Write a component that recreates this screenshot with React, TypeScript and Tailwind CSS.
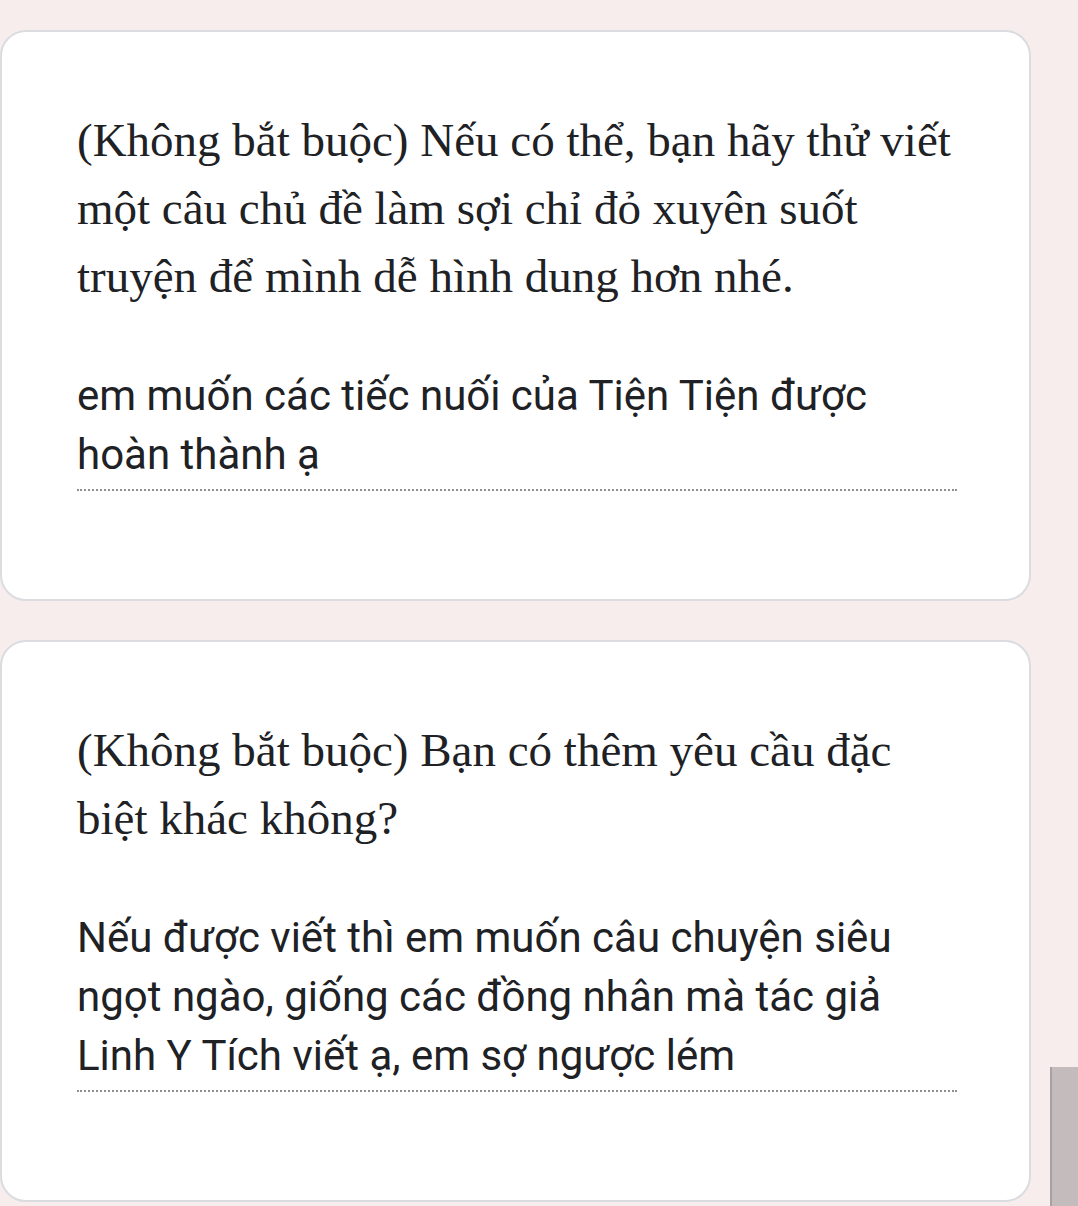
import React from "react";

interface QuestionCardProps {
  question: string;
  answer: string;
}

const QuestionCard: React.FC<QuestionCardProps> = ({ question, answer }) => {
  return (
    <div className="w-[1031px] rounded-[26px] border-2 border-[#dadce0] bg-white pb-[108px] pl-[75px] pr-[72px] pt-[74px]">
      {/* Question title */}
      <p
        className="text-[47px] leading-[68px] text-[#202124]"
        style={{ fontFamily: '"Liberation Serif", "DejaVu Serif", serif' }}
      >
        {question}
      </p>

      {/* Answer, read-only */}
      <div className="mt-[56px] border-b-2 border-dotted border-[#8f8f8f] pb-[5px]">
        <p
          className="text-[42px] leading-[59px] text-[#202124]"
          style={{ fontFamily: 'Roboto, "Liberation Sans", sans-serif' }}
        >
          {answer}
        </p>
      </div>
    </div>
  );
};

export default function App() {
  return (
    <div className="relative flex min-h-[1206px] w-[1078px] flex-col gap-[39px] overflow-hidden bg-[#f8eded] pt-[30px]">
      <QuestionCard
        question="(Không bắt buộc) Nếu có thể, bạn hãy thử viết một câu chủ đề làm sợi chỉ đỏ xuyên suốt truyện để mình dễ hình dung hơn nhé."
        answer="em muốn các tiếc nuối của Tiện Tiện được hoàn thành ạ"
      />
      <QuestionCard
        question="(Không bắt buộc) Bạn có thêm yêu cầu đặc biệt khác không?"
        answer="Nếu được viết thì em muốn câu chuyện siêu ngọt ngào, giống các đồng nhân mà tác giả Linh Y Tích viết ạ, em sợ ngược lém"
      />

      {/* scrollbar thumb */}
      <div className="absolute bottom-0 right-0 h-[139px] w-[28px] border-l-2 border-[#a9a0a1] bg-[#c3bbbc]" />
    </div>
  );
}
